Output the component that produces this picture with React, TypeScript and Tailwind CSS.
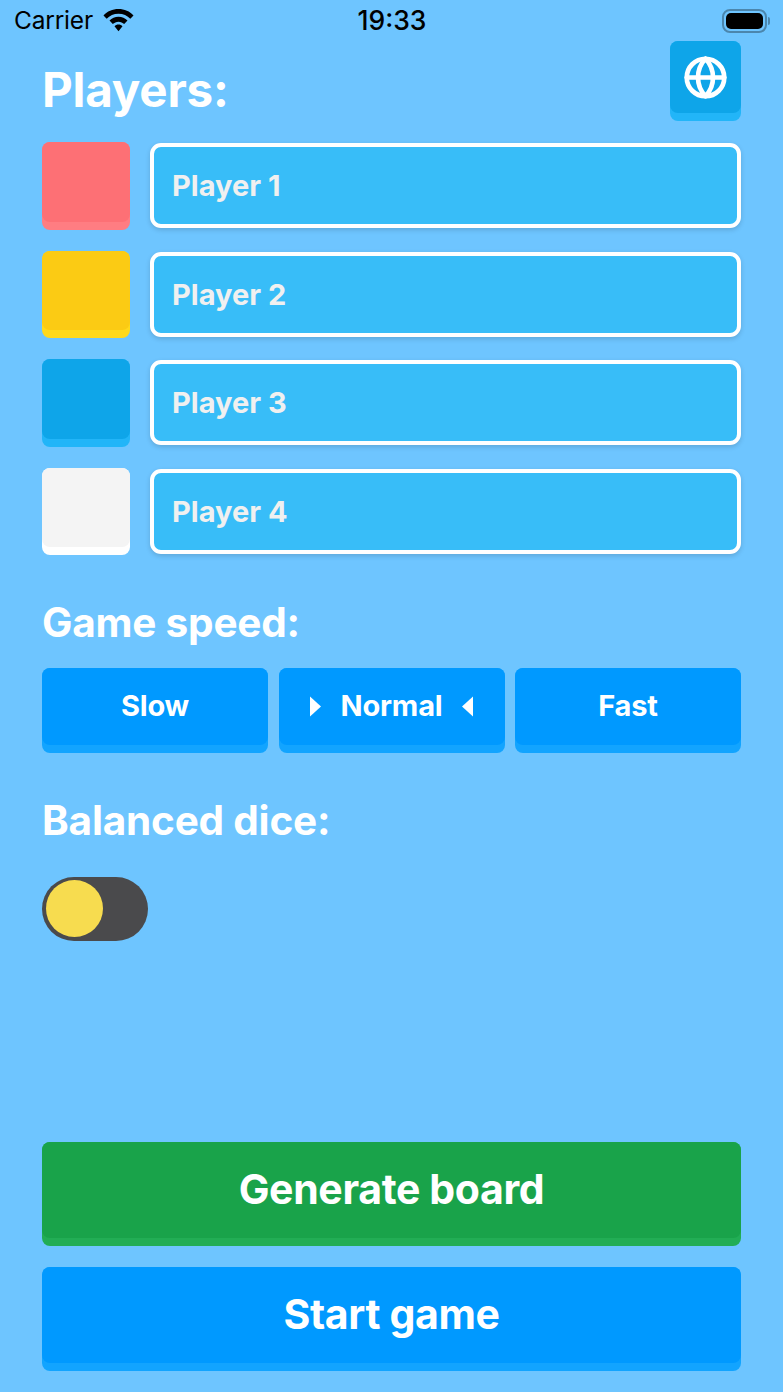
import { Globe } from "lucide-react";

const players = [
  { name: "Player 1", top: "bg-[#fd7075]", bottom: "bg-[#ff7d82]" },
  { name: "Player 2", top: "bg-[#fbcb14]", bottom: "bg-[#ffd91c]" },
  { name: "Player 3", top: "bg-[#0ea5e9]", bottom: "bg-[#22b5f8]" },
  { name: "Player 4", top: "bg-[#f4f4f4]", bottom: "bg-white" },
];

function StatusBar() {
  return (
    <div className="h-[41px] shrink-0 pl-[14px] pr-[13px] flex items-center justify-between text-black font-['Inter',sans-serif]">
      <div className="flex items-center gap-[10px] w-[200px]">
        <span className="text-[24.500px] leading-none tracking-[-0.2px]">Carrier</span>
        <svg width="31" height="23" viewBox="0 0 31 23" fill="black">
          <path d="M15.500 0C9.500 0 4.200 2.400.5 6.400l3.200 3.400C6.600 6.700 10.800 4.800 15.500 4.800s8.900 1.900 11.800 5l3.200-3.400C26.800 2.400 21.500 0 15.500 0z" />
          <path d="M15.500 7.800c-3.500 0-6.700 1.400-9 3.800l3.300 3.500c1.500-1.500 3.500-2.400 5.700-2.400s4.200.9 5.700 2.400l3.300-3.500c-2.300-2.400-5.500-3.800-9-3.800z" />
          <path d="M15.500 15.600c-1.600 0-3 .6-4 1.700l4 5 4-5c-1-1.100-2.400-1.700-4-1.700z" />
        </svg>
      </div>
      <span className="text-[26.500px] leading-none font-medium">19:33</span>
      <div className="w-[200px] flex justify-end items-center">
        <div className="w-[45px] h-[24px] rounded-[8px] border-2 border-[#4b86ad] p-[2px]">
          <div className="w-full h-full bg-black rounded-[5px]" />
        </div>
        <div className="w-[2px] h-[8px] bg-[#4b86ad] rounded-r-sm ml-[1px]" />
      </div>
    </div>
  );
}

function SpeedButton({ label, selected }: { label: string; selected?: boolean }) {
  return (
    <div className="flex-1 h-[85px] rounded-[8px] bg-[#12a4ff] pb-[8px]">
      <div className="h-full rounded-[8px] bg-[#0099ff] flex items-center justify-center gap-[20px] text-white text-[29px] font-bold tracking-[-0.2px]">
        {selected && (
          <svg width="12" height="21" viewBox="0 0 12 20" fill="white">
            <path d="M1 0 L12 10 L1 20 Z" />
          </svg>
        )}
        <span>{label}</span>
        {selected && (
          <svg width="12" height="21" viewBox="0 0 12 20" fill="white">
            <path d="M11 0 L0 10 L11 20 Z" />
          </svg>
        )}
      </div>
    </div>
  );
}

function BigButton({ label, top, bottom }: { label: string; top: string; bottom: string }) {
  return (
    <div className={`h-[104px] rounded-[8px] pb-[8px] ${bottom}`}>
      <div className={`h-full rounded-[8px] flex items-center justify-center text-white text-[41px] font-bold tracking-[-0.35px] ${top}`}>
        {label}
      </div>
    </div>
  );
}

export default function App() {
  return (
    <div className="w-[783px] h-[1392px] bg-[#6ec5ff] flex flex-col overflow-hidden font-['Inter',sans-serif]">
      <StatusBar />
      <div className="flex-1 flex flex-col px-[42px] pb-[21px]">
        <div className="flex justify-between items-start h-[80px]">
          <h1 className="text-[47.500px] leading-[56px] mt-[21px] font-bold text-white tracking-[-0.2px]">Players:</h1>
          <div className="w-[71px] h-[80px] rounded-[8px] bg-[#22b5f8] pb-[8px]">
            <div className="h-full rounded-[8px] bg-[#0ea5e9] flex items-center justify-center">
              <Globe className="w-[45px] h-[45px] text-white" strokeWidth={2.500} />
            </div>
          </div>
        </div>

        <div className="mt-[21px] flex flex-col gap-[21px]">
          {players.map((p) => (
            <div key={p.name} className="flex items-center gap-[20px]">
              <div className={`w-[88px] h-[87.500px] rounded-[8px] pb-[8px] ${p.bottom}`}>
                <div className={`h-full rounded-[8px] ${p.top}`} />
              </div>
              <div className="flex-1 h-[85px] rounded-[11px] border-[4px] border-white bg-[#38bdf8] shadow-[0_2px_5px_rgba(0,0,0,0.15)] flex items-center pl-[18px] text-[#f0f0f0] text-[29px] font-bold">
                {p.name}
              </div>
            </div>
          ))}
        </div>

        <h2 className="mt-[44.500px] text-[40.500px] leading-[46px] font-bold text-white tracking-[-0.2px]">Game speed:</h2>
        <div className="mt-[22px] flex gap-[10.500px]">
          <SpeedButton label="Slow" />
          <SpeedButton label="Normal" selected />
          <SpeedButton label="Fast" />
        </div>

        <h2 className="mt-[45px] text-[40.500px] leading-[46px] font-bold text-white tracking-[-0.2px]">Balanced dice:</h2>
        <div className="mt-[33px] w-[106px] h-[64px] rounded-full bg-[#4a4a4c] flex items-center pl-[4px]">
          <div className="w-[57px] h-[57px] rounded-full bg-[#f7dc4f]" />
        </div>

        <div className="mt-auto flex flex-col gap-[21px]">
          <BigButton label="Generate board" top="bg-[#19a34a]" bottom="bg-[#22ad55]" />
          <BigButton label="Start game" top="bg-[#0099ff]" bottom="bg-[#12a4ff]" />
        </div>
      </div>
    </div>
  );
}
